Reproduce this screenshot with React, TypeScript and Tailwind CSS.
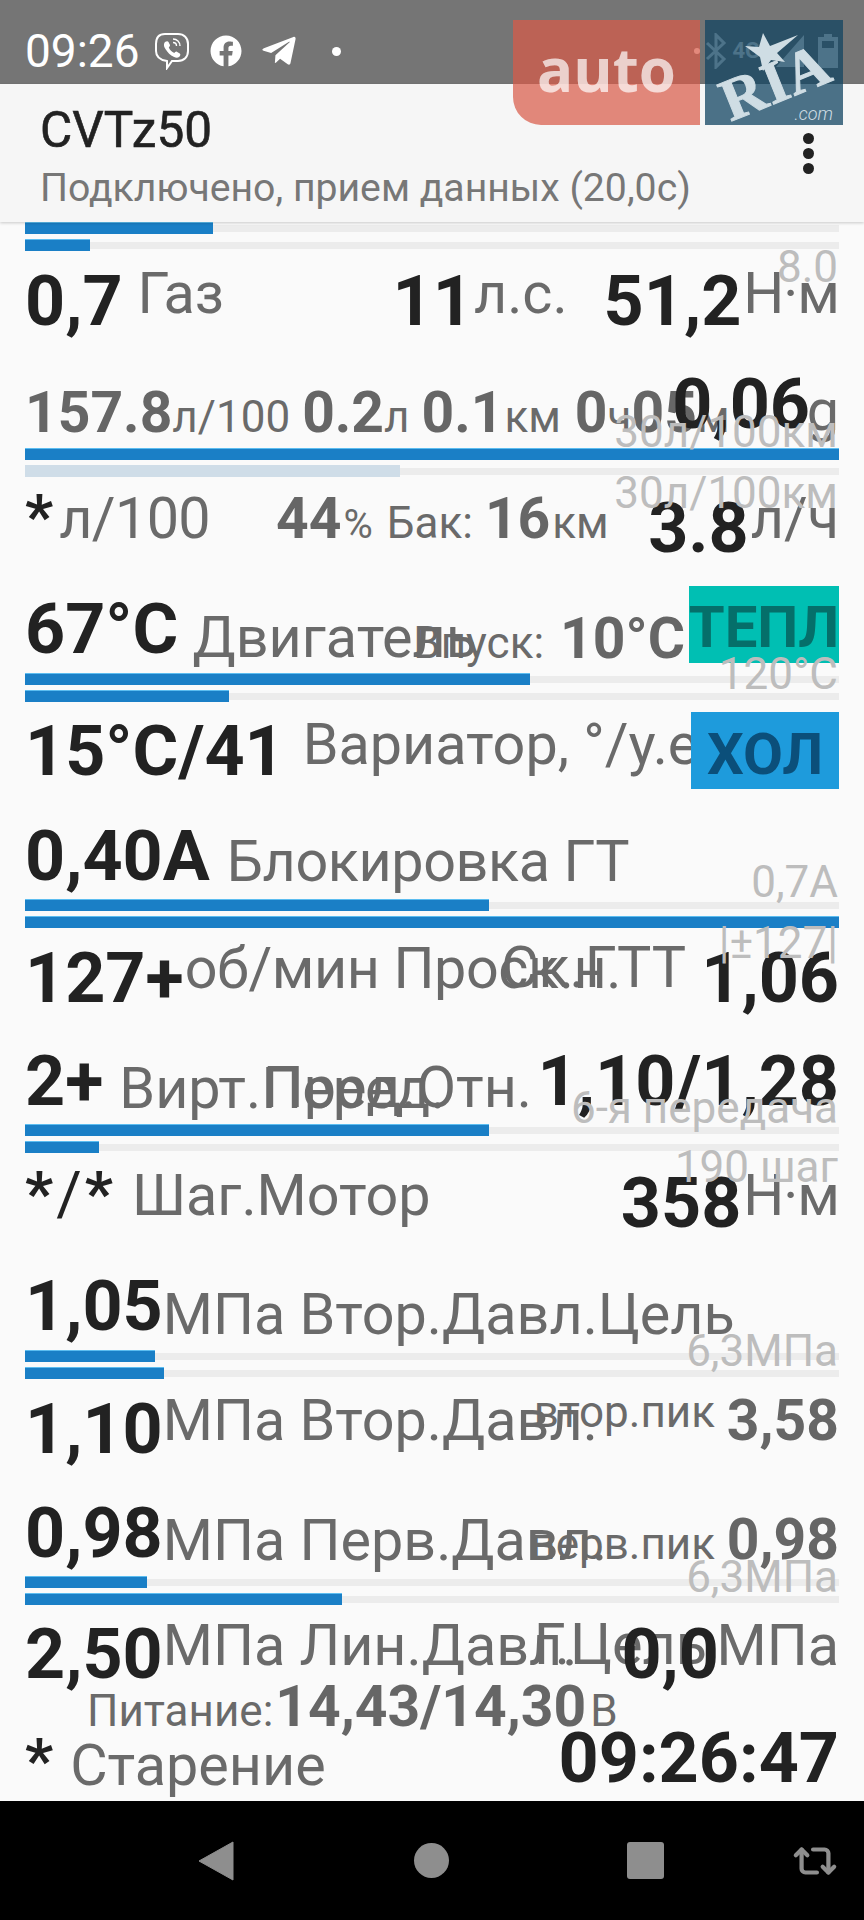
import React from "react";
import { FaFacebook, FaTelegramPlane } from "react-icons/fa";
import { Repeat2 } from "lucide-react";

const B = ({ children, className = "" }: { children: React.ReactNode; className?: string }) => (
  <span className={`text-[70px] font-bold leading-none text-[#222] whitespace-nowrap ${className}`}>{children}</span>
);
const T = ({ children, className = "" }: { children: React.ReactNode; className?: string }) => (
  <span className={`text-[57.5px] leading-none text-[#6a6a6a] whitespace-nowrap ${className}`}>{children}</span>
);
const G = ({ children, className = "" }: { children: React.ReactNode; className?: string }) => (
  <span className={`text-[57px] font-bold leading-none text-[#666] whitespace-nowrap ${className}`}>{children}</span>
);
const S = ({ children, className = "" }: { children: React.ReactNode; className?: string }) => (
  <span className={`text-[44px] leading-none text-[#6a6a6a] whitespace-nowrap ${className}`}>{children}</span>
);
const Ghost = ({ children, className = "" }: { children: React.ReactNode; className?: string }) => (
  <span className={`absolute right-[26px] z-10 text-[44px] leading-none text-[#bdbdbd] whitespace-nowrap ${className}`}>{children}</span>
);
const Bar = ({ w, light }: { w: string; light?: boolean }) => (
  <div className="relative h-[12px]">
    <div className="absolute inset-x-0 top-[3px] h-[7px] bg-[#ececec]" />
    <div className={`relative h-full ${w} ${light ? "bg-[#cfdde8]" : "border-t border-[#5cbdf0] bg-[#1a7fc6]"}`} />
  </div>
);
const Bars = ({ a, b, light }: { a: string; b: string; light?: boolean }) => (
  <div className="flex h-[29px] flex-col gap-[5px] pl-[25px] pr-[25px]">
    <Bar w={a} />
    <Bar w={b} light={light} />
  </div>
);

const Viber = () => (
  <svg width="36" height="38" viewBox="0 0 36 38" fill="none" stroke="white" strokeWidth="2" className="ml-[14px]">
    <path d="M11 2h13c6 0 10 4 10 10v7c0 6-4 10-10 10h-6l-5 7v-7c-7-1-11-4-11-10v-7C2 6 5 2 11 2z" />
    <path d="M11 10c1.500-1 3-1 3.500 0l1.500 3c.3 1-1 2-1.200 2.500 1 2.500 3 4.500 5.500 5.500.5-.5 1.500-1.700 2.500-1.300l3 1.700c1 .8.500 2.300-.5 3.300-2 1.800-5 .8-8-1.200-3-2.200-5.500-5.500-7-8.500-.6-2-.4-3.800.7-5z" fill="white" stroke="none" />
    <path d="M19 7c4 0 7 3 7 7M19 10.500c2 0 3.500 1.500 3.500 3.500" strokeWidth="1.400" />
  </svg>
);

export default function App() {
  return (
    <div className="relative flex h-[1920px] w-[864px] flex-col overflow-hidden bg-[#fafafa] font-['Roboto',sans-serif]">
      {/* status bar */}
      <div className="flex h-[84px] shrink-0 items-center bg-[#757575] pl-[25px] pr-[26px] pt-[18px] text-white">
        <span className="text-[46px] leading-none">09:26</span>
        <Viber />
        <FaFacebook className="ml-[20px] text-[32px]" />
        <FaTelegramPlane className="ml-[18px] text-[38px]" />
        <span className="ml-[34px] h-[9px] w-[9px] rounded-full bg-white" />
        <span className="ml-auto h-[6px] w-[6px] rounded-full bg-white" />
        <svg width="24" height="36" viewBox="0 0 24 36" fill="none" stroke="white" strokeWidth="3" className="ml-[4px]">
          <path d="M3 10l17 16-8 8V2l8 8L3 26" />
        </svg>
        <span className="ml-[4px] text-[22px] font-bold leading-none">4G+</span>
        <svg width="28" height="32" viewBox="0 0 28 32" className="ml-[4px]">
          <path d="M28 0v32H0z" fill="white" />
        </svg>
        <svg width="20" height="34" viewBox="0 0 20 34" className="ml-[14px]">
          <path d="M6 0h8v3h6v31H0V3h6z" fill="white" />
          <path d="M4 7h12v7H4z" fill="#757575" />
        </svg>
      </div>
      {/* action bar */}
      <div className="relative z-20 flex h-[138px] shrink-0 flex-col bg-[#f6f6f6] pl-[40px] pt-[18px] shadow-[0_1px_3px_rgba(0,0,0,0.2)]">
        <span className="text-[49.500px] leading-[56px] text-[#222] [-webkit-text-stroke:0.6px_#222]">CVTz50</span>
        <span className="mt-[7px] text-[39.200px] leading-[46px] text-[#777]">Подключено, прием данных (20,0с)</span>
        <div className="absolute right-[50px] top-[49px] flex flex-col gap-[4px]">
          <span className="h-[11px] w-[11px] rounded-full bg-[#222]" />
          <span className="h-[11px] w-[11px] rounded-full bg-[#222]" />
          <span className="h-[11px] w-[11px] rounded-full bg-[#222]" />
        </div>
      </div>

      <Bars a="w-[188px]" b="w-[65px]" />

      <div className="relative h-[197px] px-[25px]">
        <Ghost className="top-[-6px]">8.0</Ghost>
        <div className="mt-[15px] flex items-baseline">
          <B>0,7</B>
          <T className="ml-[15px] -translate-y-[12px]">Газ</T>
          <B className="ml-auto">11</B>
          <T className="ml-[1px] -translate-y-[12px]">л.с.</T>
          <B className="ml-[36px]">51,2</B>
          <T className="ml-[2px] -translate-y-[12px] tracking-[-1px]">Н·м</T>
        </div>
        <div className="mt-[48px] flex items-baseline">
          <G>157.8</G>
          <S>л/100</S>
          <G className="ml-[12px]">0.2</G>
          <S>л</S>
          <G className="ml-[12px]">0.1</G>
          <S className="ml-[1px]">км</S>
          <G className="ml-[14px]">0</G>
          <S>ч</S>
          <G>05</G>
          <S>м</S>
          <T className="ml-auto -translate-y-[2px]">g</T>
        </div>
        <B className="absolute right-[54px] top-[118px]">0,06</B>
        <Ghost className="top-[159px]">30л/100км</Ghost>
      </div>

      <Bars a="w-full" b="w-[375px]" light />

      <div className="relative h-[196px] px-[25px]">
        <Ghost className="top-[-6px]">30л/100км</Ghost>
        <div className="mt-[2px] flex items-baseline">
          <span className="text-[62px] font-bold leading-none text-[#222]">*</span>
          <T className="ml-[6px] tracking-[-0.6px]">л/100</T>
          <G className="ml-[66px]">44</G>
          <span className="ml-[2px] text-[40px] leading-none text-[#6a6a6a]">%</span>
          <S className="ml-[14px]">Бак:</S>
          <G className="ml-[12px]">16</G>
          <S className="ml-[2px]">км</S>
          <B className="ml-auto translate-y-[14px]">3.8</B>
          <T className="ml-[2px]">л/ч</T>
        </div>
        <div className="mt-[45px] flex items-baseline">
          <B>67°C</B>
          <T className="ml-[14px] translate-y-[4px]">Двигатель</T>
        </div>
        <div className="absolute right-[179px] top-[133px] flex items-baseline">
          <S>Впуск:</S>
          <G className="ml-[16px]">10°C</G>
        </div>
        <div className="absolute right-[25px] top-[109px] flex h-[77px] w-[150px] items-start justify-center bg-[#00bfb3] pt-[12px] text-[58px] font-bold leading-none text-[#056f6a]">ТЕПЛ</div>
        <Ghost className="top-[175px]">120°C</Ghost>
      </div>

      <Bars a="w-[505px]" b="w-[204px]" />

      <div className="relative h-[197px] px-[25px]">
        <div className="mt-[14px] flex items-baseline">
          <B>15°C/41</B>
          <T className="ml-[18px] -translate-y-[11px]">Вариатор, °/у.е</T>
        </div>
        <div className="absolute right-[25px] top-[10px] flex h-[77px] w-[148px] items-start justify-center bg-[#1e9bdc] pt-[13px] text-[58px] font-bold leading-none text-[#0b4f7a]">ХОЛ</div>
        <div className="mt-[35px] flex items-baseline">
          <B>0,40A</B>
          <T className="ml-[17px] translate-y-[1px] tracking-[-0.4px]">Блокировка ГТ</T>
        </div>
        <Ghost className="top-[158px]">0,7A</Ghost>
      </div>

      <Bars a="w-[464px]" b="w-full" />

      <div className="relative h-[196px] px-[25px]">
        <Ghost className="top-[-7px]">|±127|</Ghost>
        <div className="mt-[15px] flex items-baseline">
          <B>127+</B>
          <T className="ml-[1px] -translate-y-[14px] tracking-[-0.4px]">об/мин Проск.н.</T>
          <B className="ml-auto">1,06</B>
        </div>
        <T className="absolute right-[178px] top-[11px]">Ск.ГТТ</T>
        <div className="mt-[33px] flex items-baseline">
          <B>2+</B>
          <T className="ml-[16px] translate-y-[3px]">Вирт.Перед.</T>
          <B className="ml-auto">1,10/1,28</B>
        </div>
        <T className="absolute right-[332px] top-[131px]">Пред.Отн.</T>
        <Ghost className="top-[158px]">6-я передача</Ghost>
      </div>

      <Bars a="w-[464px]" b="w-[74px]" />

      <div className="relative h-[197px] px-[25px]">
        <Ghost className="top-[-8px]">190 шаг</Ghost>
        <div className="mt-[3px] flex items-baseline">
          <span className="text-[62px] font-bold leading-none text-[#222]">*</span>
          <span className="mx-[3px] text-[62px] leading-none text-[#222]">/</span>
          <span className="text-[62px] font-bold leading-none text-[#222]">*</span>
          <T className="ml-[19px]">Шаг.Мотор</T>
          <B className="ml-auto translate-y-[12px]">358</B>
          <T className="ml-[2px] tracking-[-1px]">Н·м</T>
        </div>
        <div className="mt-[45px] flex items-baseline">
          <B>1,05</B>
          <T className="translate-y-[4px]">МПа Втор.Давл.Цель</T>
        </div>
        <Ghost className="top-[176px]">6,3МПа</Ghost>
      </div>

      <Bars a="w-[130px]" b="w-[139px]" />

      <div className="relative h-[197px] px-[25px]">
        <div className="mt-[15px] flex items-baseline">
          <B>1,10</B>
          <T className="-translate-y-[13px]">МПа Втор.Давл.</T>
          <G className="ml-auto -translate-y-[13px]">3,58</G>
        </div>
        <S className="absolute right-[149px] top-[11px]">втор.пик</S>
        <div className="mt-[34px] flex items-baseline">
          <B>0,98</B>
          <T className="translate-y-[3px]">МПа Перв.Давл.</T>
          <G className="ml-auto translate-y-[2px]">0,98</G>
        </div>
        <S className="absolute right-[149px] top-[143px]">перв.пик</S>
        <Ghost className="top-[176px]">6,3МПа</Ghost>
      </div>

      <Bars a="w-[122px]" b="w-[317px]" />

      <div className="relative h-[196px] px-[25px]">
        <div className="mt-[14px] flex items-baseline">
          <B>2,50</B>
          <T className="-translate-y-[13px]">МПа Лин.Давл.</T>
          <T className="ml-auto -translate-y-[13px]">МПа</T>
        </div>
        <T className="absolute right-[157px] top-[11px]">Г.Цель</T>
        <B className="absolute right-[145px] top-[14px]">0,0</B>
        <div className="-mt-[11px] flex items-baseline pl-[62px]">
          <S>Питание:</S>
          <G className="ml-[2px]">14,43/14,30</G>
          <S className="ml-[4px]">В</S>
        </div>
        <div className="-mt-[12px] flex items-baseline">
          <span className="text-[62px] font-bold leading-none text-[#222]">*</span>
          <T className="ml-[17px] translate-y-[3px]">Старение</T>
          <B className="ml-auto">09:26:47</B>
        </div>
      </div>

      {/* navigation bar */}
      <div className="flex h-[119px] shrink-0 items-center bg-black text-[#8e8e8e]">
        <svg width="36" height="40" viewBox="0 0 36 40" className="ml-[198px]">
          <path d="M35 1v38L1 20z" fill="#8e8e8e" stroke="#8e8e8e" strokeLinejoin="round" />
        </svg>
        <span className="ml-[180px] h-[35px] w-[35px] rounded-full bg-[#8e8e8e]" />
        <span className="ml-[178px] h-[37px] w-[37px] rounded-[3px] bg-[#8e8e8e]" />
        <Repeat2 size={46} strokeWidth={2.2} className="ml-[128px]" />
      </div>

      {/* advertising watermark */}
      <div className="absolute left-[513px] top-[20px] z-30 flex h-[105px] w-[187px] items-start justify-center rounded-bl-[28px] bg-[rgba(216,91,73,0.72)] pt-[14px] font-['Open_Sans',sans-serif] text-[60px] font-bold leading-[70px] text-white/70">auto</div>
      <div className="absolute left-[705px] top-[20px] z-30 h-[105px] w-[138px] overflow-hidden bg-[rgba(17,68,97,0.75)]">
        <svg width="138" height="105" viewBox="0 0 138 105" className="absolute inset-0">
          <path d="M58 13l7 13 28-11-21 18 8 9-14-2-8 11-3-14-15-11 14 1z" fill="#cfdde4" />
        </svg>
        <span className="absolute left-[14px] top-[32px] -rotate-[22deg] font-['Liberation_Serif',serif] text-[60px] font-bold leading-none tracking-[1px] text-[#cfdde4] [-webkit-text-stroke:1px_#cfdde4]">RIA</span>
        <span className="absolute bottom-[-1px] right-[10px] text-[18px] font-light italic leading-[24px] text-[#cfdde4]">.com</span>
      </div>
    </div>
  );
}
